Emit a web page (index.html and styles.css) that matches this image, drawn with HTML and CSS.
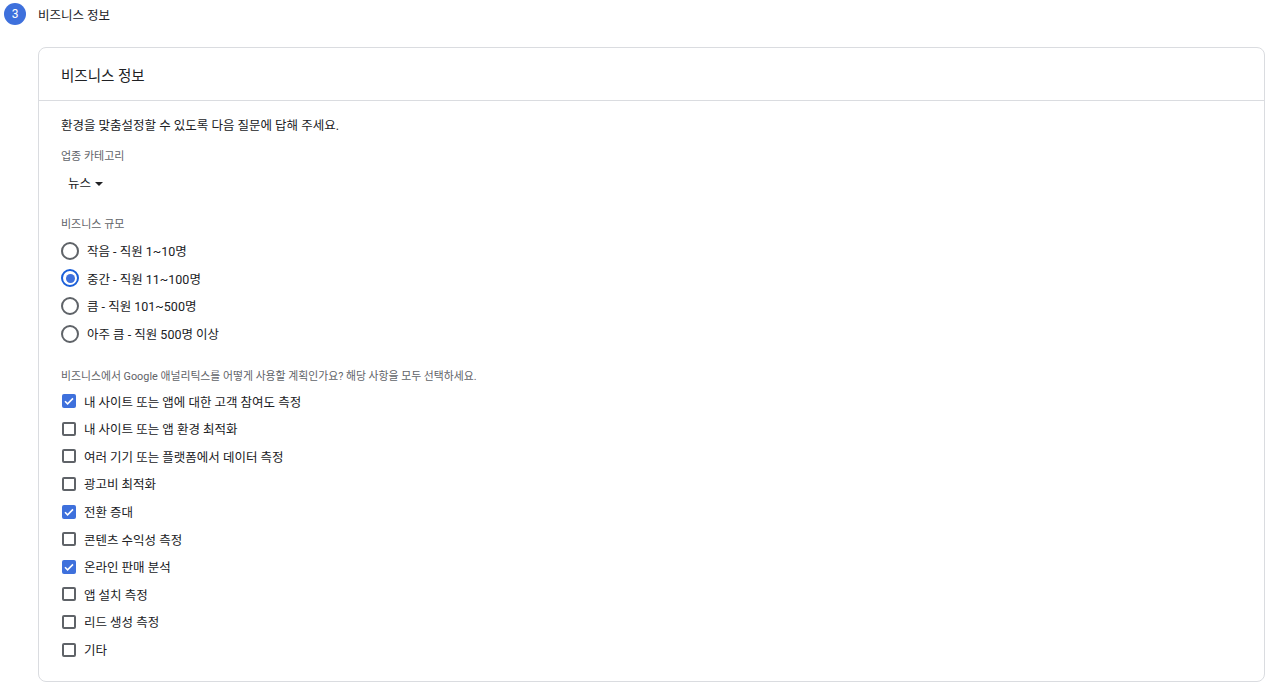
FILE: index.html
```html
<!DOCTYPE html>
<html lang="ko">
<head>
<meta charset="utf-8">
<title>비즈니스 정보</title>
<link rel="stylesheet" href="styles.css">
</head>
<body>
<div class="step">
  <span class="step-num">3</span>
  <span class="step-title">비즈니스 정보</span>
</div>
<div class="card">
  <div class="card-head">비즈니스 정보</div>
  <div class="card-body">
    <p class="intro">환경을 맞춤설정할 수 있도록 다음 질문에 답해 주세요.</p>
    <div class="label">업종 카테고리</div>
    <div class="select">뉴스 <span class="caret"></span></div>
    <div class="label label-size">비즈니스 규모</div>
    <div class="options">
      <label class="row"><span class="radio"></span>작음 - 직원 1~10명</label>
      <label class="row"><span class="radio on"></span>중간 - 직원 11~100명</label>
      <label class="row"><span class="radio"></span>큼 - 직원 101~500명</label>
      <label class="row"><span class="radio"></span>아주 큼 - 직원 500명 이상</label>
    </div>
    <div class="label label-q">비즈니스에서 Google 애널리틱스를 어떻게 사용할 계획인가요? 해당 사항을 모두 선택하세요.</div>
    <div class="options checks">
      <label class="row"><span class="box on"><svg viewBox="0 0 14 14"><path d="M3 7.2l2.6 2.6L11 4.4"/></svg></span>내 사이트 또는 앱에 대한 고객 참여도 측정</label>
      <label class="row"><span class="box"></span>내 사이트 또는 앱 환경 최적화</label>
      <label class="row"><span class="box"></span>여러 기기 또는 플랫폼에서 데이터 측정</label>
      <label class="row"><span class="box"></span>광고비 최적화</label>
      <label class="row"><span class="box on"><svg viewBox="0 0 14 14"><path d="M3 7.2l2.6 2.6L11 4.4"/></svg></span>전환 증대</label>
      <label class="row"><span class="box"></span>콘텐츠 수익성 측정</label>
      <label class="row"><span class="box on"><svg viewBox="0 0 14 14"><path d="M3 7.2l2.6 2.6L11 4.4"/></svg></span>온라인 판매 분석</label>
      <label class="row"><span class="box"></span>앱 설치 측정</label>
      <label class="row"><span class="box"></span>리드 생성 측정</label>
      <label class="row"><span class="box"></span>기타</label>
    </div>
  </div>
</div>
</body>
</html>
```

FILE: styles.css
```css
* { box-sizing: border-box; }
body {
  margin: 0;
  background: #fff;
  color: #202124;
  font-family: Roboto, "Noto Sans CJK KR", sans-serif;
}
.step {
  display: flex;
  align-items: center;
  height: 28px;
  padding-left: 4px;
  gap: 12px;
}
.step-num {
  width: 22px;
  height: 22px;
  border-radius: 50%;
  background: #3e70dc;
  color: #fff;
  font-size: 12px;
  display: flex;
  align-items: center;
  justify-content: center;
}
.step-title {
  font-size: 12.5px;
  color: #202124;
}
.card {
  margin: 19px 16px 0 38px;
  border: 1px solid #dadce0;
  border-radius: 8px;
  width: 1227px;
}
.card-head {
  height: 53px;
  display: flex;
  align-items: center;
  padding-left: 22px;
  font-size: 14.5px;
  border-bottom: 1px solid #dadce0;
}
.card-body {
  padding: 15px 22px 18px;
}
.intro {
  margin: 0;
  font-size: 12.5px;
  line-height: 20px;
}
.label {
  margin-top: 13px;
  font-size: 11px;
  line-height: 16px;
  color: #5f6368;
}
.select {
  margin-top: 9px;
  padding-left: 7px;
  font-size: 12.5px;
  line-height: 20px;
  display: flex;
  align-items: center;
  gap: 4px;
}
.caret {
  width: 0;
  height: 0;
  border-left: 4px solid transparent;
  border-right: 4px solid transparent;
  border-top: 4px solid #202124;
}
.label-size { margin-top: 23px; }
.label-q { margin-top: 22px; font-size: 10.85px; }
.options { margin-top: 4px; display: flex; flex-direction: column; }
.row {
  height: 27.6px;
  display: flex;
  align-items: center;
  gap: 8px;
  font-size: 12.5px;
}
.radio {
  width: 18px;
  height: 18px;
  border: 2px solid #5f6368;
  border-radius: 50%;
  display: flex;
  align-items: center;
  justify-content: center;
}
.radio.on { border-color: #1a5fd9; }
.radio.on::after {
  content: "";
  width: 9px;
  height: 9px;
  border-radius: 50%;
  background: #3e70dc;
}
.checks { margin-top: 2px; }
.checks .row { height: 27.6px; padding-left: 1px; }
.box {
  width: 14px;
  height: 14px;
  border: 2px solid #5f6368;
  border-radius: 2px;
  display: flex;
}
.box.on {
  border: none;
  background: #3e70dc;
}
.box svg { width: 14px; height: 14px; }
.box path { fill: none; stroke: #fff; stroke-width: 1.6; }
```
